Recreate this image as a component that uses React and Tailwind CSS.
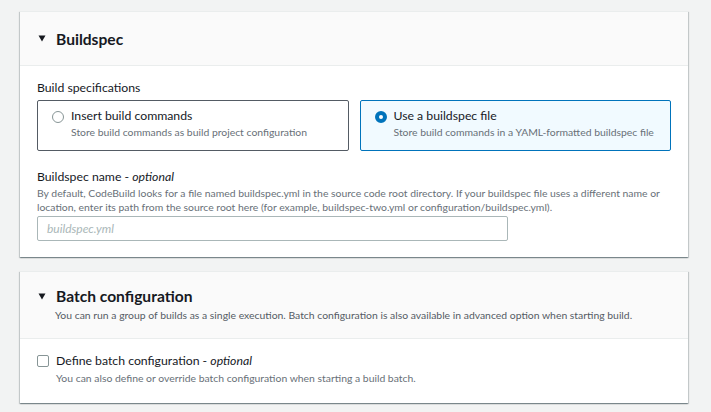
import React from 'react';

const font = { fontFamily: 'Lato, "Noto Sans", sans-serif' };

function Caret() {
  return (
    <svg width="8" height="7" viewBox="0 0 8 7" className="ml-[1px] mr-[10px] shrink-0" aria-hidden="true">
      <path d="M0.5 0.5h7L4 6.5z" fill="#16191f" />
    </svg>
  );
}

function Card({ children, className = '' }) {
  return (
    <section
      className={`w-[668px] bg-white border-t border-[#eaeded] shadow-[0_1px_1px_0_rgba(0,28,36,0.3),1px_1px_1px_0_rgba(0,28,36,0.15),-1px_1px_1px_0_rgba(0,28,36,0.15)] ${className}`}
    >
      {children}
    </section>
  );
}

function RadioTile({ selected, title, description }) {
  return (
    <div
      className={`flex h-[51px] flex-1 items-start rounded-[2px] border pl-[14px] pt-[7px] ${
        selected ? 'border-[#0073bb] bg-[#f1faff]' : 'border-[#545b64] bg-white'
      }`}
    >
      {selected ? (
        <span className="mt-[3px] mr-[7px] box-border h-[12px] w-[12px] shrink-0 rounded-full border-[4px] border-[#0073bb] bg-white" />
      ) : (
        <span className="mt-[3px] mr-[7px] box-border h-[12px] w-[12px] shrink-0 rounded-full border-[1.5px] border-[#879596] bg-white" />
      )}
      <div>
        <div className="text-[12.25px] leading-[16px] text-[#16191f]">{title}</div>
        <div className="mt-[1px] text-[10.4px] leading-[14px] text-[#687078]">{description}</div>
      </div>
    </div>
  );
}

export default function App() {
  return (
    <div className="min-h-[412px] w-[711px] bg-[#f2f3f3] pt-[11px] pl-[20px]" style={font}>
      <Card>
        <header className="flex h-[54px] items-center border-b border-[#eaeded] bg-[#fafafa] pl-[17px]">
          <Caret />
          <h2 className="text-[15.6px] font-bold leading-[22px] text-[#16191f]">Buildspec</h2>
        </header>

        <div className="px-[17px] pt-[14px] pb-[16px]">
          <p className="text-[12.25px] leading-[16px] text-[#16191f]">Build specifications</p>
          <div className="mt-[4px] flex gap-[11px]">
            <RadioTile
              title="Insert build commands"
              description="Store build commands as build project configuration"
            />
            <RadioTile
              selected
              title="Use a buildspec file"
              description="Store build commands in a YAML-formatted buildspec file"
            />
          </div>

          <div className="mt-[18px]">
            <p className="text-[12.25px] leading-[16px] text-[#16191f]">
              Buildspec name - <i>optional</i>
            </p>
            <p className="mt-[1px] text-[10.4px] leading-[14px] text-[#687078]">
              By default, CodeBuild looks for a file named buildspec.yml in the source code root directory. If your buildspec file uses a different name or location, enter its path from the source root here (for example, buildspec-two.yml or configuration/buildspec.yml).
            </p>
            <div className="mt-[2px] flex h-[25px] w-[471px] items-center rounded-[2px] border border-[#aab7b8] bg-white px-[9px]">
              <span className="text-[12px] italic text-[#aab7b8]">buildspec.yml</span>
            </div>
          </div>
        </div>
      </Card>

      <Card className="mt-[14px]">
        <header className="border-b border-[#eaeded] bg-[#fafafa] pl-[17px] pt-[13px] pb-[16px]">
          <div className="flex items-center">
            <Caret />
            <h2 className="text-[15.6px] font-bold leading-[22px] text-[#16191f]">Batch configuration</h2>
          </div>
          <p className="mt-[1px] ml-[18px] text-[10.4px] leading-[14px] text-[#545b64]">
            You can run a group of builds as a single execution. Batch configuration is also available in advanced option when starting build.
          </p>
        </header>
        <div className="flex items-start px-[17px] pt-[14px] pb-[18px]">
          <span className="mt-[2px] mr-[7px] box-border h-[12px] w-[12px] shrink-0 rounded-[2px] border-[1.5px] border-[#879596] bg-white" />
          <div>
            <div className="text-[12.25px] leading-[16px] text-[#16191f]">
              Define batch configuration - <i>optional</i>
            </div>
            <div className="mt-[2px] text-[10.4px] leading-[14px] text-[#687078]">
              You can also define or override batch configuration when starting a build batch.
            </div>
          </div>
        </div>
      </Card>
    </div>
  );
}
